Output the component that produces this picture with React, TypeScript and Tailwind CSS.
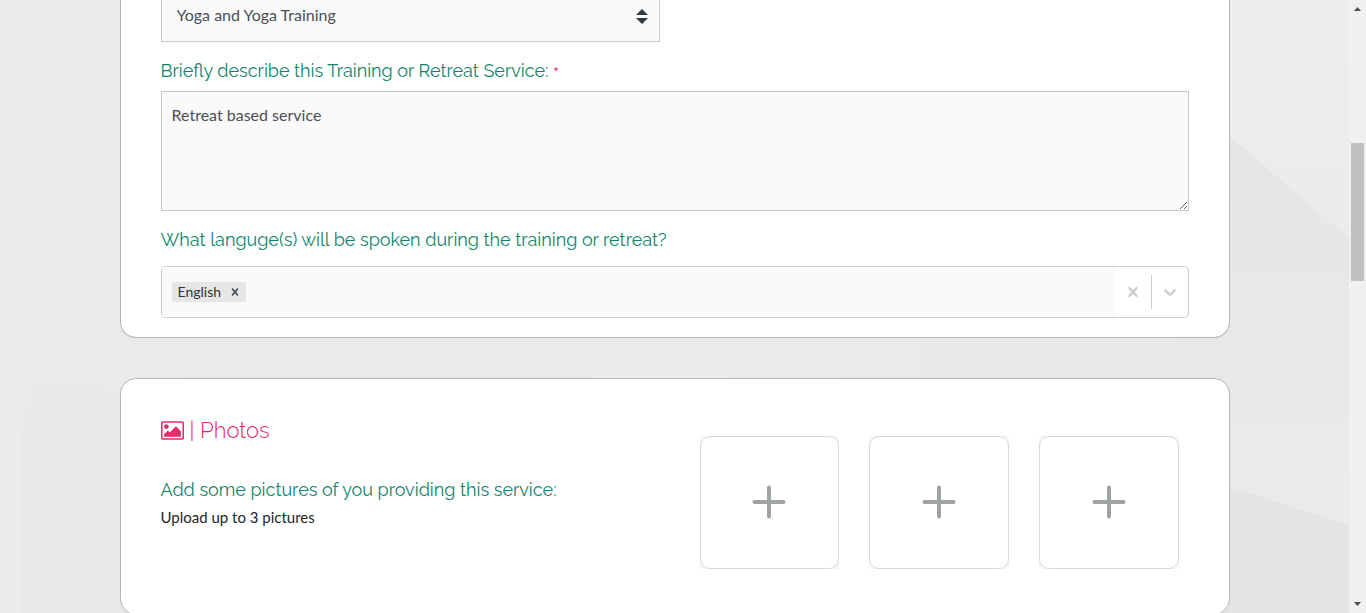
import { useState } from "react";

const label = "font-[Raleway,Lato,sans-serif] text-[18px] leading-6 font-normal text-[#12846c]";

const CROSS =
  "M14.348 14.849c-0.469 0.469-1.229 0.469-1.697 0l-2.651-3.030-2.651 3.029c-0.469 0.469-1.229 0.469-1.697 0-0.469-0.469-0.469-1.229 0-1.697l2.758-3.15-2.759-3.152c-0.469-0.469-0.469-1.228 0-1.697s1.228-0.469 1.697 0l2.652 3.031 2.651-3.031c0.469-0.469 1.228-0.469 1.697 0s0.469 1.229 0 1.697l-2.758 3.152 2.758 3.15c0.469 0.469 0.469 1.229 0 1.698z";
const CHEVRON =
  "M4.516 7.548c0.436-0.446 1.043-0.481 1.576 0l3.908 3.747 3.908-3.747c0.533-0.481 1.141-0.446 1.574 0 0.436 0.445 0.408 1.197 0 1.615-0.406 0.418-4.695 4.502-4.695 4.502-0.217 0.223-0.502 0.335-0.787 0.335s-0.57-0.112-0.789-0.335c0 0-4.287-4.084-4.695-4.502s-0.436-1.17 0-1.615z";

function Backdrop() {
  return (
    <svg
      className="absolute inset-0 h-full w-full"
      viewBox="0 0 1349 613"
      preserveAspectRatio="none"
      aria-hidden="true"
    >
      <defs>
        <linearGradient id="base" x1="0" y1="0" x2="0" y2="1">
          <stop offset="0" stopColor="#ececec" />
          <stop offset="1" stopColor="#e8e8e8" />
        </linearGradient>
        <linearGradient id="upper" x1="0" y1="0" x2="0" y2="1">
          <stop offset="0" stopColor="#eeeeee" />
          <stop offset="1" stopColor="#ebebeb" />
        </linearGradient>
        <linearGradient id="middle" x1="0" y1="0" x2="0" y2="1">
          <stop offset="0" stopColor="#e5e5e5" />
          <stop offset="1" stopColor="#ebebeb" />
        </linearGradient>
        <linearGradient id="facet" x1="0" y1="0" x2="1" y2="0">
          <stop offset="0" stopColor="#ebebeb" />
          <stop offset="1" stopColor="#e8e8e8" />
        </linearGradient>
      </defs>
      <rect width="1349" height="613" fill="url(#base)" />
      <path d="M120 120L20 420V613H0V0H120Z" fill="#ebebeb" />
      <path d="M100 320L200 385H110Z" fill="#eaeaea" />
      <path d="M626 330L590 385H1240V330Z" fill="url(#facet)" />
      <path d="M1220 0H1349V240L1220 130Z" fill="url(#upper)" />
      <path d="M1220 128L1349 238V525L1220 484Z" fill="url(#middle)" />
      <path d="M1220 484L1349 525V613H1220Z" fill="#e4e4e4" />
    </svg>
  );
}

function Scrollbar() {
  return (
    <div className="flex h-screen w-[17px] shrink-0 flex-col items-center bg-[#f0f0f0]" aria-hidden="true">
      <svg className="h-[17px] w-[17px] shrink-0" viewBox="0 0 17 17" fill="#505050">
        <path d="M5 11L8.500 7L12 11Z" />
      </svg>
      <div className="flex w-full flex-1 flex-col items-center">
        <div className="grow-[126]" />
        <div className="w-[13px] grow-[138] bg-[#c1c1c1]" />
        <div className="grow-[315]" />
      </div>
      <svg className="h-[17px] w-[17px] shrink-0" viewBox="0 0 17 17" fill="#505050">
        <path d="M5 6L8.500 10L12 6Z" />
      </svg>
    </div>
  );
}

function PhotoTile({ index }: { index: number }) {
  return (
    <div className="bg-[#f7f7f7]">
      <button
        type="button"
        aria-label={`Add picture ${index}`}
        className="flex h-[133px] w-full items-center justify-center rounded-[10px] border border-[#d9d9d9] bg-white pb-px"
      >
        <svg className="h-[34px] w-[34px]" viewBox="0 0 34 34" stroke="#9fa3a2" strokeWidth="4" strokeLinecap="round">
          <path d="M17 2.500V31.500M2.500 17H31.500" />
        </svg>
      </button>
    </div>
  );
}

export default function App() {
  const [description, setDescription] = useState("Retreat based service");
  const [languages, setLanguages] = useState(["English"]);

  return (
    <div className="flex h-screen overflow-hidden bg-[#e9e9e9] font-[Proxima_Nova,Lato,sans-serif]">
      <div className="relative min-w-0 flex-1 overflow-hidden">
        <Backdrop />
        <main className="relative mx-auto flex w-full max-w-[1110px] flex-col gap-10">
          <section className="rounded-b-2xl border border-t-0 border-[#b5b5b5] bg-white px-10 pb-[19px]">
            <div className="grid grid-cols-2 gap-[30px]">
              <div className="relative">
                <select
                  aria-label="Service type"
                  className="block h-[42px] w-full appearance-none border border-t-0 border-[#c8c8c8] bg-[#fafafa] pb-[11px] pl-[15px] text-base text-[#495057]"
                >
                  <option>Yoga and Yoga Training</option>
                </select>
                <svg
                  className="pointer-events-none absolute top-[9px] right-3 h-[15px] w-3"
                  viewBox="0 0 4 5"
                  fill="#343a40"
                >
                  <path d="M2 0L0 2h4zm0 5L0 3h4z" />
                </svg>
              </div>
            </div>

            <label htmlFor="description" className={`mt-[17px] block ${label}`}>
              Briefly describe this Training or Retreat Service:{" "}
              <span className="font-[Lato,sans-serif] text-sm leading-4 text-[#e91e63]">*</span>
            </label>
            <textarea
              id="description"
              value={description}
              onChange={(e) => setDescription(e.target.value)}
              className="mt-2 block h-[120px] w-full resize border border-[#c8c8c8] bg-[#fafafa] px-[10px] py-[11px] text-base text-[#495057]"
            />

            <label htmlFor="languages" className={`mt-[17px] block ${label}`}>
              What languge(s) will be spoken during the training or retreat?
            </label>
            <div className="mt-[14px] flex h-[52px] overflow-hidden rounded border border-[#cccccc] bg-white">
              <div className="flex flex-1 items-center bg-[#fafafa] px-[10px]">
                {languages.map((name) => (
                  <span key={name} className="flex h-5 items-center rounded-xs bg-[#e6e6e6] pl-[6px] text-sm text-[#333333]">
                    {name}
                    <button
                      type="button"
                      aria-label={`Remove ${name}`}
                      onClick={() => setLanguages(languages.filter((l) => l !== name))}
                      className="ml-[3px] px-1"
                    >
                      <svg className="h-[14px] w-[14px]" viewBox="0 0 20 20" fill="#495057">
                        <path d={CROSS} />
                      </svg>
                    </button>
                  </span>
                ))}
                <input id="languages" className="min-w-0 flex-1 bg-transparent px-1 outline-none" />
              </div>
              <button type="button" aria-label="Clear languages" onClick={() => setLanguages([])} className="px-2">
                <svg className="h-5 w-5" viewBox="0 0 20 20" fill="#cccccc">
                  <path d={CROSS} />
                </svg>
              </button>
              <span className="my-2 w-px bg-[#cccccc]" />
              <button type="button" aria-label="Show languages" className="px-2">
                <svg className="h-5 w-5" viewBox="0 0 20 20" fill="#cccccc">
                  <path d={CHEVRON} />
                </svg>
              </button>
            </div>
          </section>

          <section className="flex justify-between gap-10 rounded-2xl border border-[#b5b5b5] bg-white px-10 pt-[35px] pb-[45px]">
            <div>
              <h2 className="flex items-center gap-[6px] font-[Raleway,Lato,sans-serif] text-[22px] leading-8 font-light text-[#e91e63]">
                <svg className="h-[19px] w-[23px]" viewBox="-64 128 1920 1536" fill="#e92a6a" aria-hidden="true">
                  <path d="M576 576q0 80-56 136t-136 56-136-56-56-136 56-136 136-56 136 56 56 136zm1024 384v448h-1408v-192l320-320 160 160 512-512zm96-704h-1600q-13 0-22.5 9.5t-9.5 22.5v1216q0 13 9.500 22.500t22.500 9.500h1600q13 0 22.500-9.500t9.500-22.500v-1216q0-13-9.500-22.500t-22.500-9.500zm160 32v1216q0 66-47 113t-113 47h-1600q-66 0-113-47t-47-113v-1216q0-66 47-113t113-47h1600q66 0 113 47t47 113z" />
                </svg>
                | Photos
              </h2>
              <p className={`mt-8 ${label}`}>Add some pictures of you providing this service:</p>
              <p className="mt-[3px] text-[15px] leading-6 text-[#212529]">Upload up to 3 pictures</p>
            </div>
            <div className="mt-[22px] mr-[10px] grid w-[479px] grid-cols-3 gap-[30px]">
              {[1, 2, 3].map((n) => (
                <PhotoTile key={n} index={n} />
              ))}
            </div>
          </section>
        </main>
      </div>
      <Scrollbar />
    </div>
  );
}
